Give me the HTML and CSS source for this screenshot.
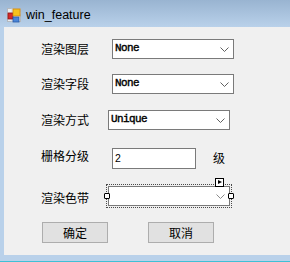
FILE: index.html
```html
<!DOCTYPE html>
<html lang="zh-CN">
<head>
    <meta charset="UTF-8">
    <title>win_feature</title>
    <link rel="stylesheet" href="styles.css">
</head>
<body>
    <div class="window">
        <div class="titlebar">
            <svg class="app-icon" width="15" height="15" viewBox="0 0 15 15">
                <rect x="0.5" y="0.5" width="13" height="13" fill="#e9edf2" stroke="#b4b8bd"/>
                <line x1="0.5" y1="5" x2="13.5" y2="5" stroke="#d0d4d9"/>
                <line x1="5" y1="0.5" x2="5" y2="13.5" stroke="#d0d4d9"/>
                <rect x="1" y="5" width="5" height="6" fill="#d42a2a" stroke="#8e1212" stroke-width="0.8"/>
                <rect x="6" y="1" width="7" height="7" fill="#f6c21c" stroke="#d08a10" stroke-width="0.8"/>
                <rect x="6" y="9" width="6" height="5" fill="#4a86d8" stroke="#2a5aa8" stroke-width="0.8"/>
            </svg>
            <span class="title">win_feature</span>
        </div>
        <div class="client">
            <div class="form">
                <div class="row">
                    <label class="field-label">渲染图层</label>
                    <div class="combo"><span class="combo-text">None</span><svg class="chevron" width="9" height="5" viewBox="0 0 9 5"><polyline points="0.5,0.5 4.5,4.5 8.5,0.5" fill="none" stroke="#606060"/></svg></div>
                </div>
                <div class="row row-field">
                    <label class="field-label">渲染字段</label>
                    <div class="combo"><span class="combo-text">None</span><svg class="chevron" width="9" height="5" viewBox="0 0 9 5"><polyline points="0.5,0.5 4.5,4.5 8.5,0.5" fill="none" stroke="#606060"/></svg></div>
                </div>
                <div class="row row-mode">
                    <label class="field-label narrow">渲染方式</label>
                    <div class="combo"><span class="combo-text">Unique</span><svg class="chevron" width="9" height="5" viewBox="0 0 9 5"><polyline points="0.5,0.5 4.5,4.5 8.5,0.5" fill="none" stroke="#606060"/></svg></div>
                </div>
                <div class="row row-grade">
                    <label class="field-label raised">栅格分级</label>
                    <div class="textbox">2</div>
                    <span class="unit">级</span>
                </div>
                <div class="row row-ramp">
                    <label class="field-label narrow lowered">渲染色带</label>
                    <div class="combo selected">
                        <span class="combo-text"></span>
                        <svg class="chevron" width="9" height="5" viewBox="0 0 9 5"><polyline points="0.5,0.5 4.5,4.5 8.5,0.5" fill="none" stroke="#8a8a8a"/></svg>
                        <span class="grip grip-left"></span>
                        <span class="grip grip-right"></span>
                        <span class="smart-tag"></span>
                    </div>
                </div>
                <div class="buttons">
                    <button type="button" class="btn">确定</button>
                    <button type="button" class="btn">取消</button>
                </div>
            </div>
        </div>
        <div class="frame-edge"></div>
    </div>
</body>
</html>
```

FILE: styles.css
```css
body {
    margin: 0;
    background-color: #b9d1ea;
    font-family: "Noto Sans CJK SC", sans-serif;
}
.window {
    width: 290px;
    height: 262px;
    display: flex;
    flex-direction: column;
    overflow: hidden;
}
.titlebar {
    height: 27px;
    flex-shrink: 0;
    display: flex;
    align-items: center;
    padding-left: 7px;
    padding-top: 3px;
    box-sizing: border-box;
    background: linear-gradient(#99b4d1, #b9d1ea);
}
.app-icon {
    display: block;
    margin-right: 4px;
}
.title {
    font-family: "Liberation Sans", Arial, sans-serif;
    font-size: 12.5px;
    color: #000;
}
.client {
    flex: 1;
    background-color: #f0f0f0;
    border-left: 4px solid #b9d1ea;
    border-bottom: 6px solid #b9d1ea;
}
.frame-edge {
    height: 1px;
    flex-shrink: 0;
    background-color: #3fc0d6;
}
.form {
    padding: 12px 0 0 37px;
    display: flex;
    flex-direction: column;
}
.row {
    display: flex;
    align-items: center;
}
.row-field {
    margin-top: 15px;
}
.row-mode {
    margin-top: 16px;
}
.row-grade {
    margin-top: 18px;
}
.row-ramp {
    margin-top: 17px;
}
.field-label {
    width: 71px;
    font-size: 12px;
    line-height: 14px;
    color: #000;
}
.field-label.narrow {
    width: 67px;
}
.field-label.raised {
    margin-bottom: 6px;
}
.field-label.lowered {
    margin-top: 3px;
}
.combo {
    width: 122px;
    height: 20px;
    box-sizing: border-box;
    border: 1px solid #7a7a7a;
    background-color: #fff;
    display: flex;
    align-items: center;
    justify-content: space-between;
    padding: 0 4px 0 2px;
}
.combo-text {
    font-family: "Liberation Mono", "Courier New", monospace;
    font-size: 11px;
    letter-spacing: -0.6px;
    color: #000;
    -webkit-text-stroke: 0.4px #000;
    margin-top: -2px;
}
.chevron {
    display: block;
    margin-top: 1px;
}
.combo.selected {
    position: relative;
    outline: 1px dotted #4a4a4a;
    outline-offset: 1px;
}
.grip {
    position: absolute;
    top: 6px;
    width: 6px;
    height: 6px;
    box-sizing: border-box;
    border: 1px solid #000;
    border-radius: 1px;
    background-color: #fff;
}
.grip-left {
    left: -5px;
}
.grip-right {
    right: -5px;
}
.smart-tag {
    position: absolute;
    top: -9px;
    right: 5px;
    width: 9px;
    height: 9px;
    box-sizing: border-box;
    border: 1px solid #000;
    background-color: #fff;
}
.smart-tag::after {
    content: "";
    position: absolute;
    left: 2px;
    top: 1px;
    border-left: 4px solid #000;
    border-top: 2.5px solid transparent;
    border-bottom: 2.5px solid transparent;
}
.textbox {
    width: 84px;
    height: 21px;
    box-sizing: border-box;
    border: 1px solid #7a7a7a;
    background-color: #fff;
    padding: 0 0 0 2px;
    font-family: "Liberation Sans", Arial, sans-serif;
    font-size: 10.5px;
    line-height: 19px;
    color: #000;
}
.unit {
    margin-left: 17px;
    margin-bottom: 2px;
    font-size: 12px;
    line-height: 14px;
}
.buttons {
    display: flex;
    gap: 40px;
    margin-top: 16px;
    padding-left: 1px;
}
.btn {
    width: 66px;
    height: 21px;
    padding: 0;
    border: 1px solid #adadad;
    background-color: #e1e1e1;
    font-family: "Noto Sans CJK SC", sans-serif;
    font-size: 12px;
    color: #000;
}
```
